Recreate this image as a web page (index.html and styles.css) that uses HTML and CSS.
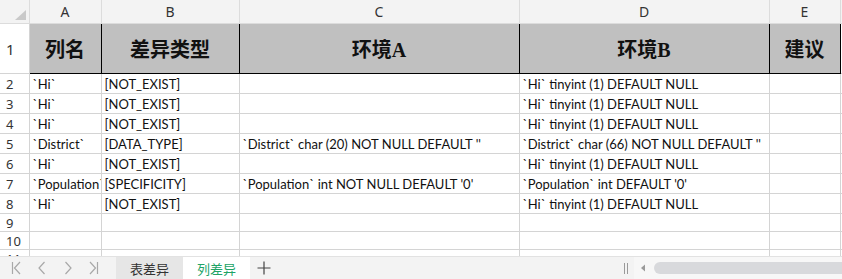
FILE: index.html
```html
<!DOCTYPE html>
<html>
	<head>
		<meta charset="utf-8">
		<title>列差异</title>
		<link rel="stylesheet" href="styles.css">
	</head>
	<body>
		<div class=sheet>
			<table class=grid>
				<colgroup>
					<col class=w-head><col class=w-a><col class=w-b><col class=w-c><col class=w-d><col class=w-e><col class=w-rest>
				</colgroup>
				<tr class=letters>
					<th class=corner><span class=tri></span></th>
					<th>A</th><th>B</th><th>C</th><th>D</th><th>E</th><th class=rest></th>
				</tr>
				<tr class=title>
					<th class=num>1</th>
					<td>列名</td><td>差异类型</td><td>环境A</td><td>环境B</td><td>建议</td><td class=rest></td>
				</tr>
				<tr class=row>
					<th class=num>2</th>
					<td>`Hi`</td><td>[NOT_EXIST]</td><td></td><td>`Hi` tinyint (1) DEFAULT NULL</td><td></td><td class=rest></td>
				</tr>
				<tr class=row>
					<th class=num>3</th>
					<td>`Hi`</td><td>[NOT_EXIST]</td><td></td><td>`Hi` tinyint (1) DEFAULT NULL</td><td></td><td class=rest></td>
				</tr>
				<tr class=row>
					<th class=num>4</th>
					<td>`Hi`</td><td>[NOT_EXIST]</td><td></td><td>`Hi` tinyint (1) DEFAULT NULL</td><td></td><td class=rest></td>
				</tr>
				<tr class=row>
					<th class=num>5</th>
					<td>`District`</td><td>[DATA_TYPE]</td><td>`District` char (20) NOT NULL DEFAULT ''</td><td>`District` char (66) NOT NULL DEFAULT ''</td><td></td><td class=rest></td>
				</tr>
				<tr class=row>
					<th class=num>6</th>
					<td>`Hi`</td><td>[NOT_EXIST]</td><td></td><td>`Hi` tinyint (1) DEFAULT NULL</td><td></td><td class=rest></td>
				</tr>
				<tr class=row>
					<th class=num>7</th>
					<td>`Population`</td><td>[SPECIFICITY]</td><td>`Population` int NOT NULL DEFAULT '0'</td><td>`Population` int DEFAULT '0'</td><td></td><td class=rest></td>
				</tr>
				<tr class=row>
					<th class=num>8</th>
					<td>`Hi`</td><td>[NOT_EXIST]</td><td></td><td>`Hi` tinyint (1) DEFAULT NULL</td><td></td><td class=rest></td>
				</tr>
				<tr class="row short">
					<th class=num>9</th>
					<td></td><td></td><td></td><td></td><td></td><td class=rest></td>
				</tr>
				<tr class="row short">
					<th class=num>10</th>
					<td></td><td></td><td></td><td></td><td></td><td class=rest></td>
				</tr>
				<tr class="row short">
					<th class=num>11</th>
					<td></td><td></td><td></td><td></td><td></td><td class=rest></td>
				</tr>
			</table>
		</div>
		<div class=tabbar>
			<div class=nav>
				<svg width=12 height=14 viewBox="0 0 12 14"><path d="M2.5 1v12M10 1L4.5 7l5.5 6" fill=none stroke="#a8a8a8" stroke-width=1.2 /></svg>
				<svg width=12 height=14 viewBox="0 0 12 14"><path d="M8.5 1L3 7l5.5 6" fill=none stroke="#a8a8a8" stroke-width=1.2 /></svg>
				<svg width=12 height=14 viewBox="0 0 12 14"><path d="M3.5 1L9 7l-5.5 6" fill=none stroke="#a8a8a8" stroke-width=1.2 /></svg>
				<svg width=12 height=14 viewBox="0 0 12 14"><path d="M2 1l5.5 6L2 13M9.5 1v12" fill=none stroke="#a8a8a8" stroke-width=1.2 /></svg>
			</div>
			<div class=tab>表差异</div>
			<div class="tab active">列差异</div>
			<div class=add>
				<svg width=14 height=14 viewBox="0 0 14 14"><path d="M7 0.5v13M0.5 7h13" fill=none stroke="#444" stroke-width=1.2 /></svg>
			</div>
			<div class=spacer></div>
			<div class=grip><span></span><span></span></div>
			<div class=hscroll>
				<svg width=6 height=8 viewBox="0 0 6 8"><path d="M5 0.5v7L1 4z" fill="#9a9a9a" /></svg>
				<div class=thumb></div>
			</div>
		</div>
	</body>
</html>
```

FILE: styles.css
```css
html, body {
	margin: 0;
	padding: 0;
	width: 842px;
	height: 279px;
	overflow: hidden;
	background-color: #ffffff;
}

body {
	font-family: Lato, 'Liberation Sans', sans-serif;
	color: #000000;
}

.sheet {
	height: 256px;
	overflow: hidden;
}

.grid {
	border-collapse: collapse;
	table-layout: fixed;
	width: 842px;
}

.w-head { width: 29px; }
.w-a { width: 72px; }
.w-b { width: 138px; }
.w-c { width: 280px; }
.w-d { width: 250px; }
.w-e { width: 71px; }
.w-rest { width: 2px; }

.grid th, .grid td {
	padding: 0;
	border: 1px solid #d4d4d4;
	overflow: hidden;
	white-space: nowrap;
}

.letters th {
	height: 23px;
	background-color: #f3f3f3;
	font-family: 'Noto Sans', sans-serif;
	font-weight: normal;
	font-size: 14px;
	color: #333333;
	border-top: none;
	border-color: #dcdcdc;
}

.letters .corner {
	position: relative;
	border-left: none;
}

.tri {
	position: absolute;
	right: 3px;
	bottom: 3px;
	width: 0;
	height: 0;
	border-left: 11px solid transparent;
	border-bottom: 10px solid #c9c9c9;
}

.num {
	font-family: 'Noto Sans', sans-serif;
	font-weight: normal;
	font-size: 15px;
	color: #333333;
	background-color: #ffffff;
	text-align: left;
	padding-left: 6px !important;
	border-left: none !important;
}

.title td {
	height: 49px;
	background-color: #c0c0c0;
	border: 1px solid #000000;
	text-align: center;
	font-family: 'Liberation Serif', 'Noto Sans CJK SC', serif;
	font-weight: bold;
	font-size: 20px;
	color: #111111;
}

.title td.rest {
	background-color: #ffffff;
	border-color: #d4d4d4;
	border-left-color: #000000;
}

.row td, .row th {
	height: 19px;
	font-size: 13px;
	line-height: 18px;
}

.row td {
	padding-left: 3px;
	vertical-align: middle;
	color: #111111;
}

.row.short td, .row.short th {
	height: 17px;
	line-height: 16px;
}

.grid .rest {
	border-right: none;
}

.tabbar {
	display: flex;
	align-items: stretch;
	height: 22px;
	border-top: 1px solid #e2e2e2;
	background-color: #f3f3f3;
	font-family: 'Noto Sans CJK SC', sans-serif;
	font-size: 13px;
}

.nav {
	display: flex;
	align-items: center;
	gap: 14px;
	padding-left: 10px;
	width: 106px;
}

.tab {
	width: 67px;
	display: flex;
	align-items: center;
	justify-content: center;
	background-color: #e6e6e6;
	color: #333333;
}

.tab.active {
	background-color: #ffffff;
	color: #21a366;
}

.add {
	display: flex;
	align-items: center;
	padding-left: 7px;
}

.spacer {
	flex: 1;
}

.grip {
	display: flex;
	align-items: center;
	gap: 2px;
	padding-right: 6px;
}

.grip span {
	width: 1px;
	height: 11px;
	background-color: #9a9a9a;
}

.hscroll {
	width: 202px;
	display: flex;
	align-items: center;
	gap: 8px;
	padding-left: 6px;
	background-color: #f7f7f7;
}

.thumb {
	flex: 1;
	height: 12px;
	border-radius: 6px 0 0 6px;
	background-color: #d8d9dc;
}
```
